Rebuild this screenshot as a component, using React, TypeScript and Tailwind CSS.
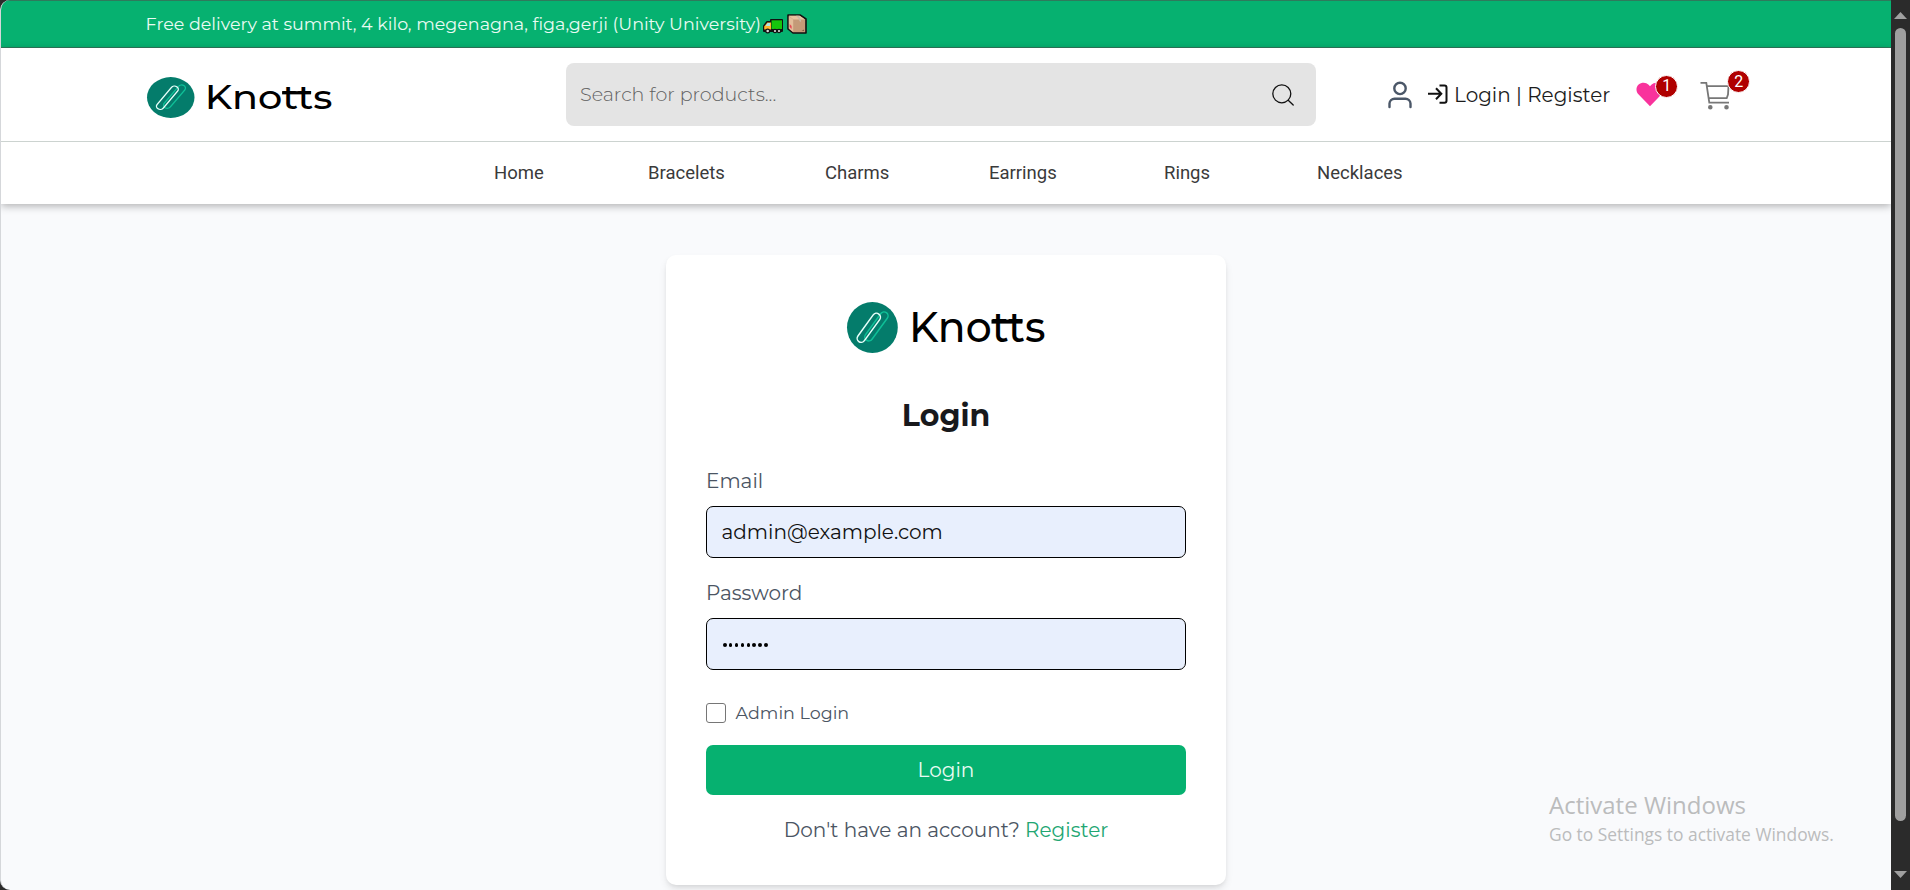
import type { ReactNode } from 'react';

const navItems = [
  { label: 'Home', width: 'w-[154px]' },
  { label: 'Bracelets', width: 'w-[177px]' },
  { label: 'Charms', width: 'w-[164px]' },
  { label: 'Earrings', width: 'w-[175px]' },
  { label: 'Rings', width: 'w-[153px]' },
  { label: 'Necklaces', width: 'w-[90px]' },
];

function Logo({ className }: { className: string }) {
  return (
    <svg viewBox="0 0 200 51" preserveAspectRatio="none" className={className} role="img" aria-label="Knotts">
      <ellipse cx="25.4" cy="25.5" rx="25.4" ry="25.4" fill="#047c6b" />
      <g fill="none" strokeWidth="1.5">
        <rect x="-4" y="-17" width="8" height="34" rx="4" stroke="#0fbf97" transform="translate(29.4 24.4) rotate(36)" />
        <rect x="-4" y="-17" width="8" height="34" rx="4" stroke="#e6fffa" transform="translate(21.8 25.8) rotate(36)" />
      </g>
      <text x="61.9" y="40" textLength="136.5" lengthAdjust="spacingAndGlyphs" fontFamily="Montserrat, sans-serif" fontWeight="500" fontSize="42" fill="#000">
        Knotts
      </text>
      <path d="M144.5 19.6H175.3" stroke="#000" strokeWidth="4" />
    </svg>
  );
}

function Badge({ children }: { children: ReactNode }) {
  return (
    <span className="flex size-[23px] items-center justify-center rounded-full border border-white bg-[#b00000] font-['Roboto'] text-[16px] leading-none text-white">
      {children}
    </span>
  );
}

function Truck() {
  return (
    <svg viewBox="0 0 20 15" className="mt-[5px] h-[15px] w-[20px]" aria-label="truck">
      <path d="M8 1H19V12H1V7L4 3H8Z" fill="#111" stroke="#111" strokeWidth="2" strokeLinejoin="round" />
      <path d="M8.5 1.3H19V10H8.5Z" fill="#16c60c" />
      <path d="M4.3 3.6H8V10.5H1.2V7.4Z" fill="#ffb52e" />
      <path d="M4.6 4H7V7H2.6Z" fill="#aee3e8" />
      <g fill="#d8d8d8" stroke="#111" strokeWidth="1.2">
        <circle cx="4.7" cy="12" r="1.9" />
        <circle cx="12" cy="12" r="1.7" />
        <circle cx="16" cy="12" r="1.7" />
      </g>
    </svg>
  );
}

function Box() {
  return (
    <svg viewBox="0 0 20 20" className="ml-1 h-[20px] w-[20px]" aria-label="package">
      <path d="M1 1H13L19 5V19H6L1 15Z" fill="#c49a78" stroke="#111" strokeWidth="1.6" strokeLinejoin="round" />
      <path d="M1.8 1.8H12.8L18 5.4H6.5Z" fill="#e8c3a0" />
      <path d="M1.8 2.2L6.2 5.6V18L1.8 14.6Z" fill="#e3bd9a" />
      <path d="M9 1.8H11.5L14 5.4V8L12.3 7V5.4Z" fill="#c9b8a6" />
      <path d="M2.6 10L4.6 12V15L2.6 13Z" fill="#e74856" />
      <path d="M14.5 17L17 15.5V17Z" fill="#7b5a40" />
    </svg>
  );
}

export default function App() {
  return (
    <div className="flex h-[890px] w-[1910px] overflow-hidden bg-[#2b2b2b] font-['Montserrat',sans-serif]">
      <div className="relative flex w-[1891px] flex-col overflow-hidden rounded-l-[10px] border-l border-[#d5d7da] bg-[#f9fafc]">
        <div className="-ml-px flex h-[48px] shrink-0 items-center border-y border-[#2f7a5c] bg-[#06b170] pl-[145.5px] text-[17.5px] leading-6 text-[#e9fbf3]">
          <span>Free delivery at summit, 4 kilo, megenagna, figa,gerji (Unity University)</span>
          <span className="ml-[2px] flex items-center">
            <Truck />
            <Box />
          </span>
        </div>

        <header className="z-10 shrink-0 bg-white shadow-[0_2px_8px_rgba(0,0,0,0.3)]">
          <div className="flex h-[94px] items-start border-b border-[#ccd3d0] pt-[15px]">
            <Logo className="mt-[13.5px] ml-[146px] h-[41px] w-[187px] overflow-visible" />
            <div className="ml-[232px] flex h-[63px] w-[750px] items-center justify-between rounded-lg bg-[#e4e4e4] pr-[22px] pl-[14px]">
              <span className="mt-[2px] text-[19.1px] font-light text-[#606060]">Search for products...</span>
              <svg viewBox="0 0 22 22" className="size-[22px]" fill="none" stroke="#111" strokeWidth="1.3" strokeLinecap="round">
                <circle cx="9.8" cy="9.8" r="9" />
                <path d="M16.2 16.2L21.2 21" />
              </svg>
            </div>
            <svg viewBox="0 0 26 28" className="mt-[18px] ml-[71px] h-[28px] w-[26px]" fill="none" stroke="#4b5768" strokeWidth="2.4" strokeLinecap="round">
              <circle cx="13" cy="7.4" r="5.7" />
              <path d="M2.5 26V22.5A5 5 0 0 1 7.5 17.8H18.5A5 5 0 0 1 23.5 22.5V26" />
            </svg>
            <svg viewBox="0 0 20 20" className="mt-[21px] ml-[15px] size-[20px]" fill="none" stroke="#111" strokeWidth="2">
              <path d="M0 9.8H13M8 4.3L13.3 9.8L8 15.3M11.5 1.4H16.5A2 2 0 0 1 18.5 3.4V16.7A2 2 0 0 1 16.5 18.7H11.5" />
            </svg>
            <span className="mt-[17px] ml-[6px] text-[20px] leading-[30px] text-[#1c1c1c]">Login | Register</span>
            <div className="relative mt-[19px] ml-[25.5px] h-[26px] w-[28px]">
              <svg viewBox="0 0 28 25" className="h-[25px] w-[28px]" fill="#f9339c">
                <path d="M14 24.2L2.4 12.3C-0.4 9.2 0 5 2.6 2.6C5.5 0 10 0 12.6 2.7L14 4.2L15.4 2.7C18 0 22.5 0 25.4 2.6C28 5 28.4 9.2 25.6 12.3Z" />
              </svg>
              <div className="absolute top-[-7.5px] left-[19.5px]">
                <Badge>1</Badge>
              </div>
            </div>
            <div className="relative mt-[18px] ml-[36.5px] h-[30px] w-[32px]">
              <svg viewBox="0 0 32 30" className="h-[30px] w-[32px]" fill="none" stroke="#777" strokeWidth="1.8">
                <path d="M0.5 1.8H6.3L9.3 21.7H29M6.8 5.1H28.5L28 13.5L26.7 17.2H8.8" />
                <circle cx="10.3" cy="26.2" r="1.4" fill="#777" />
                <circle cx="26.5" cy="26.2" r="1.4" fill="#777" />
              </svg>
              <div className="absolute top-[-11px] left-[27px]">
                <Badge>2</Badge>
              </div>
            </div>
          </div>
          <nav className="flex h-[62px] items-center pt-[2px] pl-[493px] font-['Roboto'] text-[18.5px] text-[#3a3a3a]">
            {navItems.map((item) => (
              <a key={item.label} className={item.width}>
                {item.label}
              </a>
            ))}
          </nav>
        </header>

        <main className="mx-auto mt-[51px] flex h-[630px] w-[560px] shrink-0 flex-col rounded-[10px] bg-white px-[40px] pt-[47px] shadow-[0_5px_8px_-1px_rgba(0,0,0,0.1),0_2px_5px_-2px_rgba(0,0,0,0.1)]">
          <Logo className="ml-[2px] h-[51px] w-[200px] self-center overflow-visible" />
          <h1 className="mt-[43px] text-center text-[30px] leading-[40px] font-bold text-[#18191c]">Login</h1>
          <label className="mt-[30px] text-[20px] leading-[30px] text-[#4b5563]">Email</label>
          <div className="mt-[10px] flex h-[52px] items-center rounded-[7px] border border-black bg-[#e8effd] px-[14.5px] text-[20px] text-[#111]">
            admin@example.com
          </div>
          <label className="mt-[20px] text-[20px] leading-[30px] text-[#4b5563]">Password</label>
          <div className="mt-[10px] flex h-[52px] items-center gap-[2.4px] rounded-[7px] border border-black bg-[#e8effd] px-[16px]">
            {Array.from({ length: 8 }, (_, i) => (
              <span key={i} className="mt-[2px] size-[3.5px] rounded-full bg-black" />
            ))}
          </div>
          <label className="mt-[31px] flex h-[24px] items-center gap-[9.5px] text-[17.5px] text-[#4b5563]">
            <span className="size-[20px] rounded-[3px] border border-[#767676] bg-white" />
            Admin Login
          </label>
          <button className="mt-[20px] h-[50px] shrink-0 rounded-[7px] bg-[#06b170] text-[20px] text-[#e9fbf3]">Login</button>
          <p className="mt-[20px] text-center text-[20px] leading-[30px] text-[#4b5563]">
            Don't have an account? <a className="text-[#22a672]">Register</a>
          </p>
        </main>

        <div className="absolute top-[789px] left-[1548px] font-['Open_Sans'] text-[#bbbcbd]">
          <p className="text-[24px] leading-[32px]">Activate Windows</p>
          <p className="text-[17.4px] leading-[26px]">Go to Settings to activate Windows.</p>
        </div>
      </div>

      <div className="flex w-[19px] flex-col items-center pt-[12px] pb-[12px]">
        <svg viewBox="0 0 13 7" className="h-[7px] w-[13px]" fill="#a0a0a0">
          <path d="M0 7L6.5 0L13 7Z" />
        </svg>
        <div className="mt-[9px] h-[793px] w-[11px] rounded-full bg-[#9f9f9f]" />
        <svg viewBox="0 0 13 7" className="mt-auto h-[7px] w-[13px]" fill="#a0a0a0">
          <path d="M0 0L6.5 7L13 0Z" />
        </svg>
      </div>
    </div>
  );
}
